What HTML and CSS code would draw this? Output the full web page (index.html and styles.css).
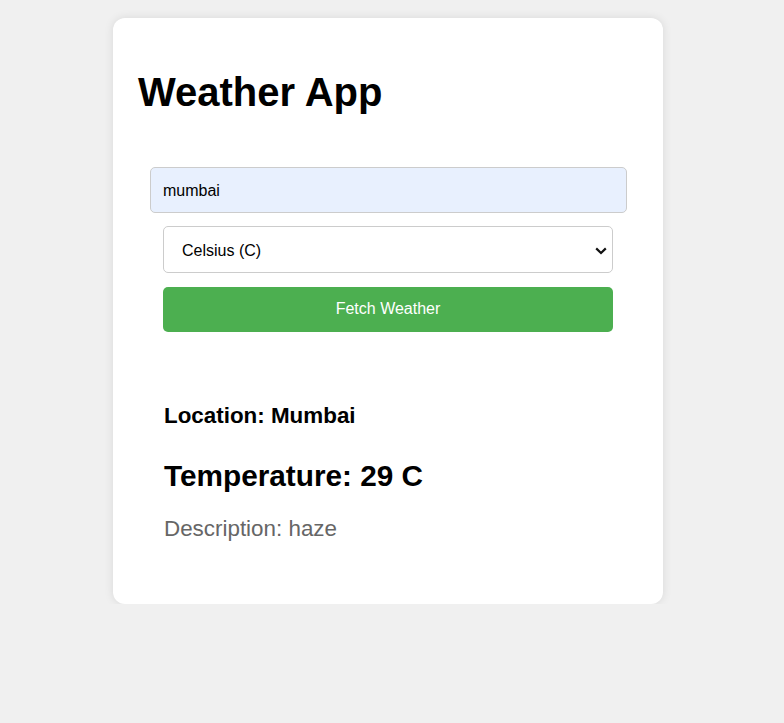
FILE: index.html
```html
<!DOCTYPE html>
<html lang="en">
<head>
<meta charset="utf-8">
<title>Weather App</title>
<link rel="stylesheet" href="styles.css">
</head>
<body>
<div class="page">
  <div class="card">
    <h1 class="title">Weather App</h1>
    <form class="form">
      <input class="city" type="text" value="mumbai">
      <div class="select-wrap">
        <select class="unit">
          <option>Celsius (C)</option>
          <option>Fahrenheit (F)</option>
        </select>
        <svg class="chevron" width="12" height="8" viewBox="0 0 12 8" aria-hidden="true"><path d="M1.2 1.4 L6 6 L10.8 1.4" fill="none" stroke="#111" stroke-width="2.2"/></svg>
      </div>
      <button class="fetch" type="button">Fetch Weather</button>
    </form>
    <div class="result">
      <h2 class="location">Location: Mumbai</h2>
      <h2 class="temp">Temperature: 29 C</h2>
      <p class="desc">Description: haze</p>
    </div>
  </div>
</div>
</body>
</html>
```
FILE: styles.css
```css
html, body {
  margin: 0;
  padding: 0;
}
body {
  background: #f0f0f0;
  font-family: "Liberation Sans", Arial, sans-serif;
  color: #000;
}
.page {
  padding: 18px 8px 0 0;
}
.card {
  box-sizing: border-box;
  width: 550px;
  margin: 0 auto;
  padding: 25px;
  background: #fff;
  border-radius: 12px;
  box-shadow: 0 0 10px rgba(0, 0, 0, 0.1);
}
.title {
  margin: 26px 0 0;
  font-size: 40px;
  line-height: 46px;
  font-weight: bold;
}
.form {
  display: flex;
  flex-direction: column;
  margin: 52px 0 0;
}
.city {
  box-sizing: border-box;
  width: 477px;
  height: 46px;
  margin: 0 0 0 12px;
  padding: 1px 12px 0;
  border: 1px solid #ccc;
  border-radius: 5px;
  background: #e8f0fe;
  font-family: "Liberation Sans", Arial, sans-serif;
  font-size: 16px;
  color: #000;
  outline: none;
}
.select-wrap {
  position: relative;
  width: 450px;
  margin: 13px 0 0 25px;
}
.unit {
  -webkit-appearance: none;
  appearance: none;
  box-sizing: border-box;
  width: 450px;
  height: 47px;
  padding: 2px 18px 0;
  border: 1px solid #ccc;
  border-radius: 5px;
  background: #fff;
  font-family: "Liberation Sans", Arial, sans-serif;
  font-size: 16px;
  color: #000;
  display: block;
}
.chevron {
  position: absolute;
  right: 6px;
  top: 21px;
  pointer-events: none;
}
.fetch {
  box-sizing: border-box;
  width: 450px;
  height: 45px;
  margin: 14px 0 0 25px;
  padding: 0 0 2px;
  border: none;
  border-radius: 5px;
  background: #4caf50;
  color: #fff;
  font-family: "Liberation Sans", Arial, sans-serif;
  font-size: 16px;
  cursor: pointer;
}
.result {
  margin: 71px 0 0 26px;
}
.location {
  margin: 0;
  font-size: 22.4px;
  line-height: 26px;
  font-weight: bold;
}
.temp {
  margin: 30px 0 0;
  font-size: 29.75px;
  line-height: 34px;
  font-weight: bold;
}
.desc {
  margin: 23px 0 37px;
  font-size: 22.4px;
  line-height: 26px;
  color: #666;
}
```
